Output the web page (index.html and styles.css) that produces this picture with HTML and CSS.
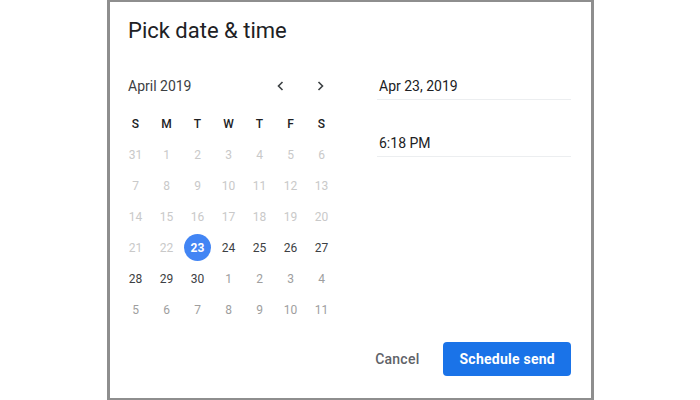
FILE: index.html
```html
<!DOCTYPE html>
<html lang="en">
<head>
    <meta charset="UTF-8">
    <meta name="viewport" content="width=device-width, initial-scale=1.0">
    <title>Pick date &amp; time</title>
    <link rel="stylesheet" href="styles.css">
</head>
<body>
    <div class="dialog">
        <h1 class="titulo">Pick date &amp; time</h1>
        <div class="conteudo">
            <div class="calendario">
                <div class="cal_topo">
                    <span class="mes">April 2019</span>
                    <div class="nav">
                        <button class="seta" aria-label="Previous month">
                            <svg width="12" height="12" viewBox="0 0 12 12"><path d="M7.5 2 L3.5 6 L7.5 10" fill="none" stroke="#3c4043" stroke-width="1.6"/></svg>
                        </button>
                        <button class="seta" aria-label="Next month">
                            <svg width="12" height="12" viewBox="0 0 12 12"><path d="M4.5 2 L8.5 6 L4.5 10" fill="none" stroke="#3c4043" stroke-width="1.6"/></svg>
                        </button>
                    </div>
                </div>
                <div class="grade">
                    <span class="dia_semana">S</span>
                    <span class="dia_semana">M</span>
                    <span class="dia_semana">T</span>
                    <span class="dia_semana">W</span>
                    <span class="dia_semana">T</span>
                    <span class="dia_semana">F</span>
                    <span class="dia_semana">S</span>

                    <span class="dia off">31</span>
                    <span class="dia off">1</span>
                    <span class="dia off">2</span>
                    <span class="dia off">3</span>
                    <span class="dia off">4</span>
                    <span class="dia off">5</span>
                    <span class="dia off">6</span>

                    <span class="dia off">7</span>
                    <span class="dia off">8</span>
                    <span class="dia off">9</span>
                    <span class="dia off">10</span>
                    <span class="dia off">11</span>
                    <span class="dia off">12</span>
                    <span class="dia off">13</span>

                    <span class="dia off">14</span>
                    <span class="dia off">15</span>
                    <span class="dia off">16</span>
                    <span class="dia off">17</span>
                    <span class="dia off">18</span>
                    <span class="dia off">19</span>
                    <span class="dia off">20</span>

                    <span class="dia off">21</span>
                    <span class="dia off">22</span>
                    <span class="dia"><span class="selecionado">23</span></span>
                    <span class="dia">24</span>
                    <span class="dia">25</span>
                    <span class="dia">26</span>
                    <span class="dia">27</span>

                    <span class="dia">28</span>
                    <span class="dia">29</span>
                    <span class="dia">30</span>
                    <span class="dia prox">1</span>
                    <span class="dia prox">2</span>
                    <span class="dia prox">3</span>
                    <span class="dia prox">4</span>

                    <span class="dia prox">5</span>
                    <span class="dia prox">6</span>
                    <span class="dia prox">7</span>
                    <span class="dia prox">8</span>
                    <span class="dia prox">9</span>
                    <span class="dia prox">10</span>
                    <span class="dia prox">11</span>
                </div>
            </div>
            <div class="campos">
                <div class="campo">Apr 23, 2019</div>
                <div class="campo campo_hora">6:18 PM</div>
            </div>
        </div>
        <div class="acoes">
            <button class="cancelar">Cancel</button>
            <button class="agendar">Schedule send</button>
        </div>
    </div>
</body>
</html>
```

FILE: styles.css
```css
* {
    margin: 0;
    padding: 0;
    box-sizing: border-box;
}
body {
    background-color: white;
    font-family: Roboto, "Liberation Sans", Arial, sans-serif;
    color: #202124;
}
.dialog {
    margin-left: 107px;
    width: 487px;
    height: 400px;
    border: 3px solid #8e8e8e;
    border-top-width: 2px;
    border-bottom-width: 2px;
    display: flex;
    flex-direction: column;
}
.titulo {
    font-size: 22px;
    font-weight: 400;
    line-height: 28px;
    padding: 15px 0 0 18px;
    color: #202124;
}
.conteudo {
    display: flex;
    margin-top: 25px;
    padding-left: 10px;
}
.calendario {
    width: 217px;
}
.cal_topo {
    display: flex;
    align-items: center;
    justify-content: space-between;
    height: 32px;
    padding-left: 8px;
}
.mes {
    font-size: 14px;
    color: #3c4043;
}
.nav {
    display: flex;
    gap: 7px;
    margin-right: 1px;
}
.seta {
    width: 32px;
    height: 32px;
    border: none;
    background: none;
    display: flex;
    align-items: center;
    justify-content: center;
    cursor: pointer;
}
.grade {
    display: grid;
    grid-template-columns: repeat(7, 31px);
    grid-auto-rows: 31px;
    margin-top: 6px;
}
.dia_semana, .dia {
    display: flex;
    align-items: center;
    justify-content: center;
    font-size: 12px;
}
.dia_semana {
    font-weight: 500;
    color: #202124;
}
.dia {
    color: #3c4043;
}
.dia.off {
    color: #c9c9c9;
}
.dia.prox {
    color: #9e9e9e;
}
.selecionado {
    width: 27px;
    height: 27px;
    border-radius: 50%;
    background-color: #4285f4;
    color: white;
    font-weight: 700;
    display: flex;
    align-items: center;
    justify-content: center;
}
.campos {
    margin-left: 40px;
    width: 194px;
    margin-top: 6px;
}
.campo {
    font-size: 14px;
    line-height: 20px;
    padding: 0 2px 3px;
    border-bottom: 1px solid #eceef0;
    color: #202124;
}
.campo_hora {
    margin-top: 33px;
}
.acoes {
    margin-top: auto;
    display: flex;
    justify-content: flex-end;
    align-items: center;
    gap: 16px;
    padding: 0 20px 22px 0;
}
.cancelar {
    border: none;
    background: none;
    font-family: inherit;
    font-size: 14px;
    font-weight: 500;
    letter-spacing: 0.25px;
    color: #5f6368;
    padding: 0 8px;
    height: 34px;
    cursor: pointer;
}
.agendar {
    border: none;
    background-color: #1a73e8;
    color: white;
    font-family: inherit;
    font-size: 14px;
    font-weight: 700;
    letter-spacing: 0.25px;
    height: 34px;
    padding: 0 16px;
    border-radius: 4px;
    cursor: pointer;
}
```
